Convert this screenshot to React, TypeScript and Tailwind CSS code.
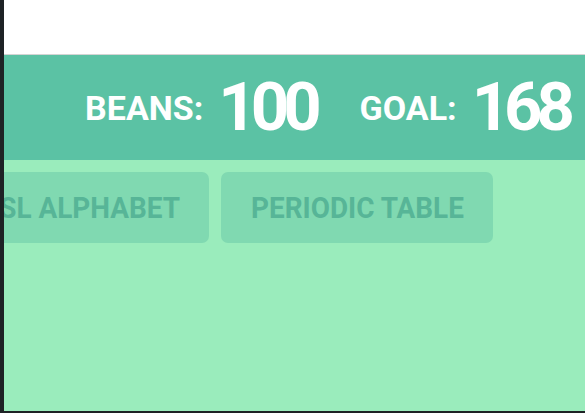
import { FC } from 'react'

const Stat: FC<{ label: string; value: string }> = ({ label, value }) => {
  return (
    <div className="flex items-center gap-[15px]">
      <span className="text-[34px] font-bold leading-none">{label}</span>
      <span className="text-[67px] font-bold leading-none tracking-[-6px]">{value}</span>
    </div>
  )
}

const Tab: FC<{ label: string; width: string }> = ({ label, width }) => {
  return (
    <button className={`${width} h-[71px] shrink-0 rounded-[7px] bg-[#80d9b1] flex items-center justify-center`}>
      <span className="inline-block whitespace-nowrap text-[30px] font-bold leading-none text-[#57b597] scale-x-[0.93]">
        {label}
      </span>
    </button>
  )
}

export default function App() {
  return (
    <div
      className="w-[585px] h-[413px] flex bg-[#1e2225] overflow-hidden"
      style={{ fontFamily: 'Roboto, "Liberation Sans", sans-serif' }}
    >
      {/* window edge */}
      <div className="w-[4px] shrink-0" />

      <div className="flex-1 flex flex-col overflow-hidden">
        {/* top white area */}
        <div className="h-[55px] shrink-0 bg-white border-b border-[#d4d4d4]" />

        {/* score bar */}
        <div className="h-[105px] shrink-0 bg-[#5bc2a4] flex items-center justify-end gap-[44px] pr-[16px] text-white">
          <Stat label="BEANS:" value="100" />
          <Stat label="GOAL:" value="168" />
        </div>

        {/* content */}
        <div className="flex-1 bg-[#9aecbc] overflow-hidden pt-[12px]">
          <div className="w-[489px] flex justify-end gap-[12px]">
            <Tab label="ASL ALPHABET" width="w-[258px]" />
            <Tab label="PERIODIC TABLE" width="w-[272px]" />
          </div>
        </div>

        <div className="h-[2px] shrink-0 bg-[#1e2225]" />
      </div>
    </div>
  )
}
